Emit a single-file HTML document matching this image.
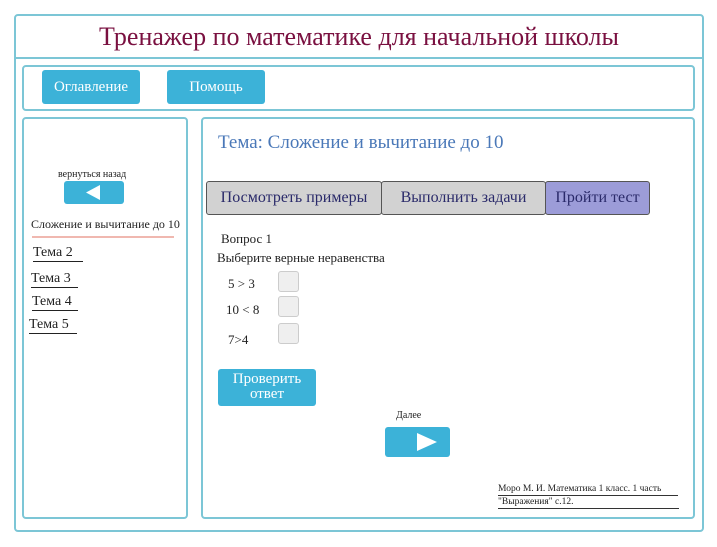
<!DOCTYPE html>
<html><head><meta charset="utf-8"><style>
*{box-sizing:border-box;margin:0;padding:0}
body{width:717px;height:547px;background:#fff;font-family:"Liberation Serif",serif;position:relative;overflow:hidden;color:#222}
.a{position:absolute;white-space:nowrap}
.box{position:absolute;border:2px solid #7cc6d6;border-radius:4px;background:#fff}
.btn{position:absolute;background:#3cb2d8;color:#fff;border-radius:3px;text-align:center;font-size:15px}
.tab{position:absolute;top:181px;height:34px;border:1px solid #555;border-radius:3px;font-size:16px;color:#2a2a6a;text-align:center;line-height:31px;background:#d2d2d2;white-space:nowrap}
.chk{position:absolute;left:278px;width:21px;height:21px;border:1px solid #ccc;border-radius:3px;background:#efefef}
.ul{position:absolute;border-bottom:1.5px solid #222;font-size:14px}
</style></head><body>
<div class="box" style="left:14px;top:14px;width:690px;height:518px"></div>
<div class="a" style="left:15px;top:57px;width:688px;height:2px;background:#7cc6d6"></div>
<div class="a" style="left:15px;top:22px;width:688px;text-align:center;font-size:26px;color:#7a1040">Тренажер по математике для начальной школы</div>
<div class="box" style="left:22px;top:65px;width:673px;height:46px"></div>
<div class="btn" style="left:42px;top:70px;width:98px;height:34px;line-height:34px">Оглавление</div>
<div class="btn" style="left:167px;top:70px;width:98px;height:34px;line-height:34px">Помощь</div>
<div class="box" style="left:22px;top:117px;width:166px;height:402px"></div>
<div class="box" style="left:201px;top:117px;width:494px;height:402px"></div>
<div class="a" style="left:58px;top:169px;font-size:10px">вернуться назад</div>
<div class="btn" style="left:64px;top:181px;width:60px;height:23px"><svg width="60" height="23"><polygon points="22,11.5 36,4 36,19" fill="#fff"/></svg></div>
<div class="a" style="left:31px;top:217px;font-size:12px">Сложение и вычитание до 10</div>
<div class="a" style="left:32px;top:236px;width:142px;height:2px;background:#f0b8b0"></div>
<div class="ul" style="left:33px;top:245px;width:50px">Тема 2</div>
<div class="ul" style="left:31px;top:271px;width:47px">Тема 3</div>
<div class="ul" style="left:32px;top:294px;width:46px">Тема 4</div>
<div class="ul" style="left:29px;top:317px;width:48px">Тема 5</div>
<div class="a" style="left:218px;top:132px;font-size:19px;color:#4a78b8">Тема: Сложение и вычитание до 10</div>
<div class="tab" style="left:206px;width:176px">Посмотреть примеры</div>
<div class="tab" style="left:381px;width:165px">Выполнить задачи</div>
<div class="tab" style="left:545px;width:105px;background:#9c9cd8">Пройти тест</div>
<div class="a" style="left:221px;top:231px;font-size:13px">Вопрос 1</div>
<div class="a" style="left:217px;top:250px;font-size:13px">Выберите верные неравенства</div>
<div class="a" style="left:228px;top:276px;font-size:13px">5 &gt; 3</div>
<div class="a" style="left:226px;top:302px;font-size:13px">10 &lt; 8</div>
<div class="a" style="left:228px;top:332px;font-size:13px">7&gt;4</div>
<div class="chk" style="top:271px"></div>
<div class="chk" style="top:296px"></div>
<div class="chk" style="top:323px"></div>
<div class="btn" style="left:218px;top:369px;width:98px;height:37px;font-size:15px;line-height:15px;padding-top:3px">Проверить<br>ответ</div>
<div class="a" style="left:396px;top:410px;font-size:10px">Далее</div>
<div class="btn" style="left:385px;top:427px;width:65px;height:30px"><svg width="65" height="30"><polygon points="32,6 52,15 32,24" fill="#fff"/></svg></div>
<div class="a" style="left:498px;top:483px;width:180px;font-size:9.5px;border-bottom:1.5px solid #333;line-height:12px;overflow:hidden">Моро М. И. Математика 1 класс. 1 часть</div>
<div class="a" style="left:498px;top:496px;width:181px;font-size:9.5px;border-bottom:1.5px solid #333;line-height:12px">"Выражения" с.12.</div>
</body></html>
